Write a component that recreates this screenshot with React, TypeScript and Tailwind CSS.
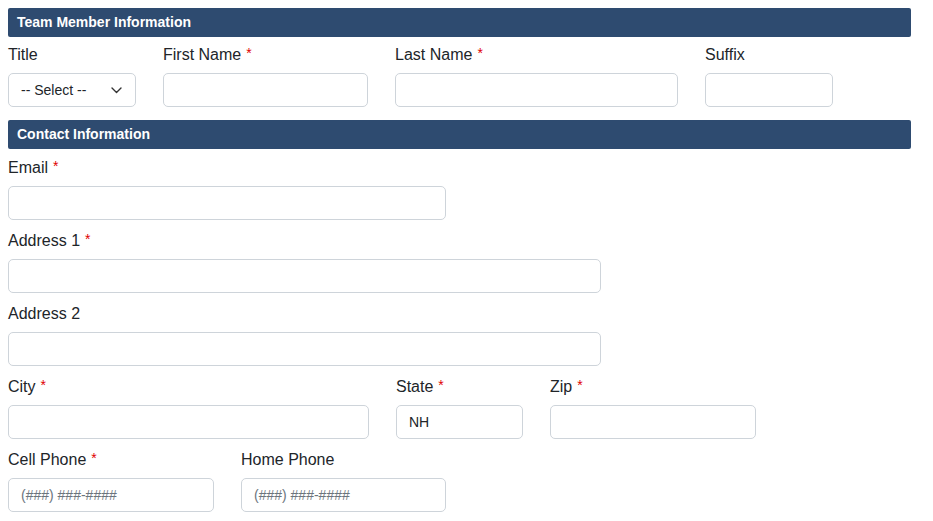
import { ReactNode } from "react";

function SectionHeader({ title }: { title: string }) {
  return (
    <div className="h-[29px] bg-[#2e4b70] rounded-[2px] px-[9px] flex items-center">
      <span className="text-white text-[14px] font-bold">{title}</span>
    </div>
  );
}

function Field({ label, required, width, children }: { label: string; required?: boolean; width: string; children?: ReactNode }) {
  return (
    <div className={`flex flex-col ${width}`}>
      <label className="h-6 text-[16px] leading-6 text-[#212529] mb-[7px] whitespace-nowrap flex items-start">
        <span className="pt-[1px]">{label}</span>
        {required && <span className="text-[#e00000] text-[14px] leading-none mt-[4px] ml-[5px]">*</span>}
      </label>
      {children ?? <input className="h-[34px] w-full rounded-[5px] border border-[#ced4da] bg-white px-3 text-[14px] outline-none" />}
    </div>
  );
}

function PhoneInput() {
  return (
    <input
      placeholder="(###) ###-####"
      className="h-[34px] w-full rounded-[5px] border border-[#ced4da] bg-white px-3 text-[14px] text-[#212529] placeholder:text-[#6c757d] outline-none"
    />
  );
}

export default function App() {
  return (
    <div className="w-[933px] h-[521px] bg-white overflow-hidden" style={{ fontFamily: '"Liberation Sans", Arial, sans-serif' }}>
      <div className="ml-[8px] mt-[8px] w-[903px]">
        <SectionHeader title="Team Member Information" />
        <div className="flex gap-[27px] pt-[5px]">
          <Field label="Title" width="w-[128px]">
            <div className="h-[34px] w-full rounded-[5px] border border-[#ced4da] bg-white pl-3 pr-[13px] flex items-center justify-between text-[14px] text-[#212529]">
              <span>-- Select --</span>
              <svg width="11" height="7" viewBox="0 0 11 7" fill="none">
                <path d="M1 1l4.5 4.5L10 1" stroke="#333" strokeWidth="1.4" strokeLinecap="round" strokeLinejoin="round" />
              </svg>
            </div>
          </Field>
          <Field label="First Name" required width="w-[205px]" />
          <Field label="Last Name" required width="w-[283px]" />
          <Field label="Suffix" width="w-[128px]" />
        </div>

        <div className="mt-[13px]">
          <SectionHeader title="Contact Information" />
        </div>
        <div className="flex flex-col gap-[8px] pt-[6px]">
          <Field label="Email" required width="w-[438px]" />
          <Field label="Address 1" required width="w-[593px]" />
          <Field label="Address 2" width="w-[593px]" />
          <div className="flex gap-[27px]">
            <Field label="City" required width="w-[361px]" />
            <Field label="State" required width="w-[127px]">
              <input
                defaultValue="NH"
                className="h-[34px] w-full rounded-[5px] border border-[#ced4da] bg-white px-3 text-[14px] text-[#212529] outline-none"
              />
            </Field>
            <Field label="Zip" required width="w-[206px]" />
          </div>
          <div className="flex gap-[27px]">
            <Field label="Cell Phone" required width="w-[206px]">
              <PhoneInput />
            </Field>
            <Field label="Home Phone" width="w-[205px]">
              <PhoneInput />
            </Field>
          </div>
        </div>
      </div>
    </div>
  );
}
